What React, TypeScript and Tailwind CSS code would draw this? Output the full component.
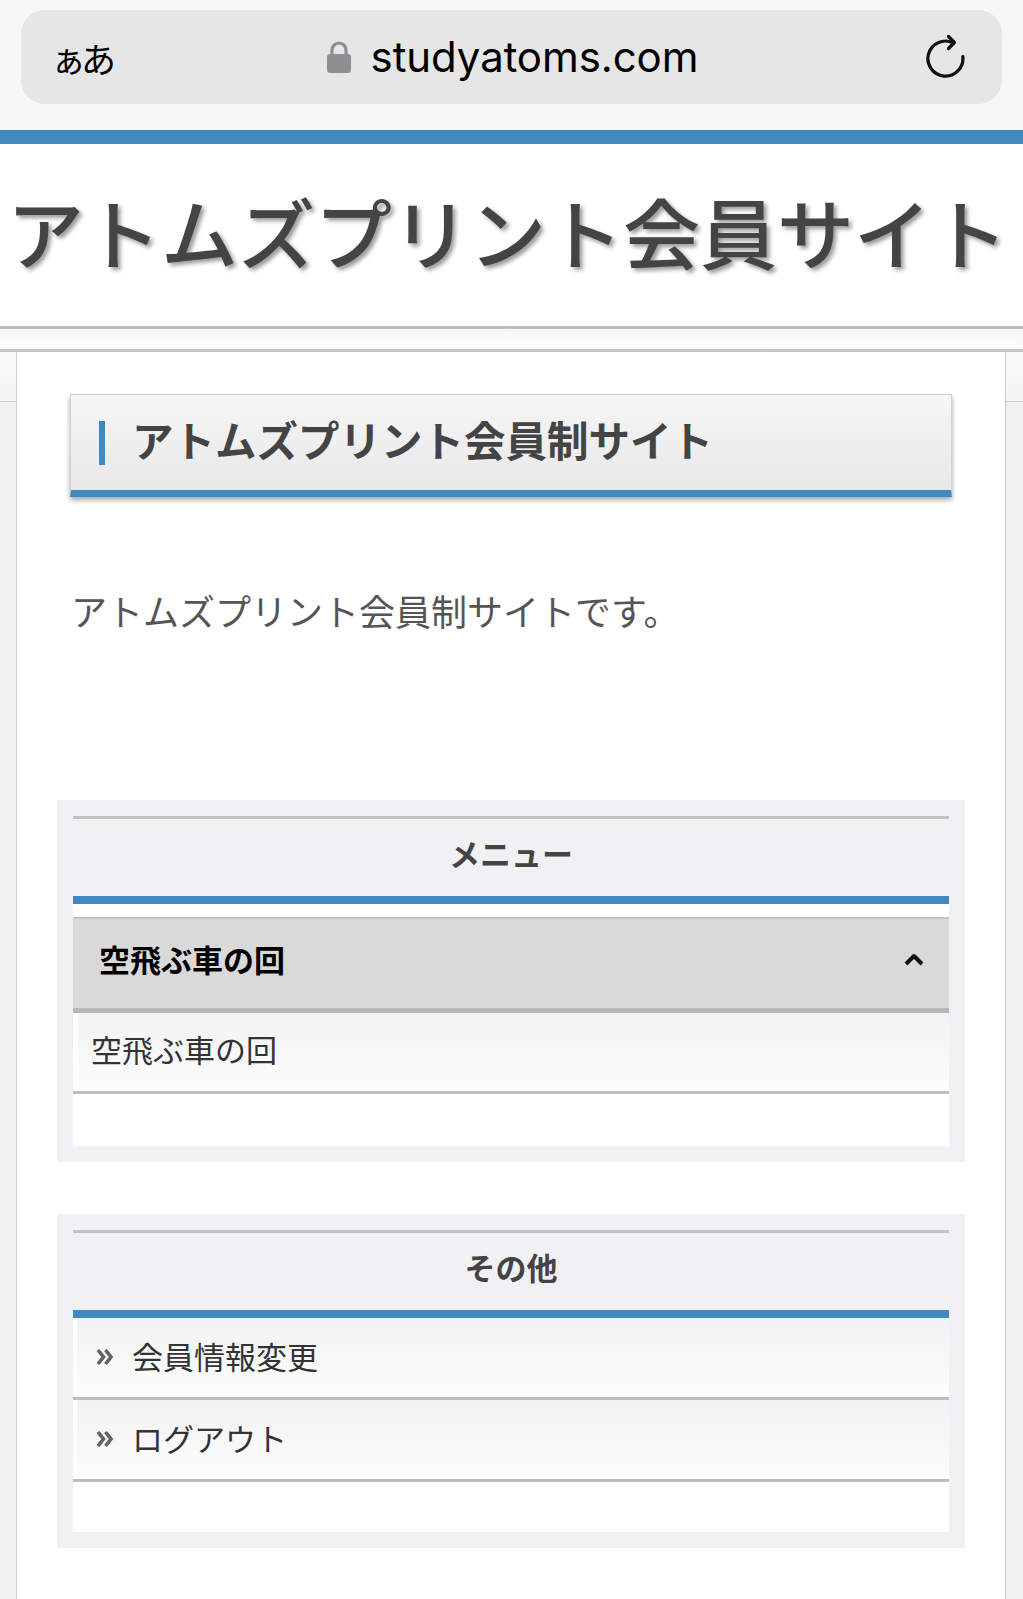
const blue = "bg-[#3f8bc0]";

const Lock = () => (
  <svg width="28" height="34" viewBox="0 0 28 34" className="shrink-0">
    <path d="M7 15V10a7 7 0 0 1 14 0v5" fill="none" stroke="#8e8e93" strokeWidth="3.2" />
    <rect x="2" y="14" width="24" height="19" rx="3" fill="#8e8e93" />
  </svg>
);

const Reload = () => (
  <svg width="40" height="48" viewBox="0 0 40 48" className="shrink-0">
    <path d="M28 9.8A17.5 17.5 0 1 0 37.8 23.5" fill="none" stroke="#111" strokeWidth="3.2" strokeLinecap="round" />
    <path d="M23.5 3.5l6 6-6 6" fill="none" stroke="#111" strokeWidth="3.2" strokeLinecap="round" strokeLinejoin="round" />
  </svg>
);

const ChevronUp = () => (
  <svg width="22" height="14" viewBox="0 0 22 14">
    <path d="M3 12l8-8 8 8" fill="none" stroke="#111" strokeWidth="4" strokeLinejoin="round" />
  </svg>
);

const DoubleChevron = () => (
  <svg width="19" height="18" viewBox="0 0 19 18" className="shrink-0">
    <path d="M2 2l5.5 7L2 16M9.5 2l5.5 7-5.5 7" fill="none" stroke="#626262" strokeWidth="3.6" />
  </svg>
);

const BoxTitle = ({ label }: { label: string }) => (
  <>
    <div className="h-[3px] bg-[#c2c2c2]" />
    <div className="h-[77px] pb-[9px] flex items-center justify-center text-[31px] font-bold text-[#444]">{label}</div>
    <div className={`h-[8px] ${blue}`} />
  </>
);

const LinkRow = ({ label }: { label: string }) => (
  <div className="border-b-[3px] border-[#bdbdbd]">
    <div className="ml-[4px] h-[79px] pb-[2px] flex items-center gap-[17px] pl-[19px] bg-gradient-to-b from-[#f2f2f4] to-[#fdfdfd] text-[31px] text-[#333]">
      <DoubleChevron />
      <span>{label}</span>
    </div>
  </div>
);

export default function App() {
  return (
    <div className="w-[1023px] min-h-[1599px] bg-white flex flex-col overflow-hidden font-['Noto_Sans_CJK_JP',sans-serif]">
      {/* Browser bar */}
      <div className="h-[130px] bg-[#f7f7f7] pt-[10px] px-[21px]">
        <div className="h-[94px] rounded-[24px] bg-[#e6e6e6] grid grid-cols-[1fr_auto_1fr] items-center px-[30px]">
          <span className="text-[35px] leading-none text-black tracking-[-5px]">ぁあ</span>
          <div className="flex items-center gap-[18px]">
            <Lock />
            <span className="text-[42px] leading-none text-black font-['Inter',sans-serif] tracking-[-0.1px]">studyatoms.com</span>
          </div>
          <div className="flex justify-end pr-[7px]">
            <Reload />
          </div>
        </div>
      </div>

      <div className={`h-[14px] ${blue}`} />

      {/* Site header */}
      <header className="h-[182px] pb-[10px] pr-[8px] flex items-center justify-center">
        <h1 className="whitespace-nowrap text-[77px] leading-none font-medium text-[#444] [text-shadow:3px_3px_4px_rgba(0,0,0,0.4)]">
          アトムズプリント会員サイト
        </h1>
      </header>
      <div className="h-[3px] bg-[#bfbfbf]" />
      <div className="h-[20px] bg-gradient-to-b from-[#f6f6f6] to-[#fdfdfd]" />
      <div className="h-[3px] bg-[#c4c4c4]" />

      {/* Body */}
      <div className="flex flex-1">
        <div className="w-[16px] flex flex-col bg-[#f1f1f1]">
          <div className="h-[50px] bg-gradient-to-b from-[#fafafa] to-[#f4f4f4] border-b border-[#cfcfcf]" />
        </div>

        <main className="flex-1 border-x border-[#cdcdcd] pt-[42px] pb-[50px]">
          <div className="mx-[53px] h-[103px] border border-[#d2d2d2] border-b-[7px] border-b-[#3f8bc0] bg-gradient-to-b from-[#f6f6f6] to-[#e8e8e8] shadow-[0_3px_5px_rgba(0,0,0,0.35)] flex items-center pl-[28px]">
            <div className={`w-[6px] h-[44px] ${blue}`} />
            <h2 className="ml-[27px] mb-[5px] text-[41.5px] font-bold text-[#444] leading-none">アトムズプリント会員制サイト</h2>
          </div>

          <p className="mx-[54px] mt-[88px] text-[36px] leading-[50px] text-[#555]">アトムズプリント会員制サイトです。</p>

          {/* Menu */}
          <section className="mx-[40px] mt-[165px] bg-[#f1f1f3] p-[16px]">
            <BoxTitle label="メニュー" />
            <div className="bg-white pt-[13px] pb-[52px]">
              <div className="border-t-[2px] border-[#c4c4c4] border-b-[5px] border-b-[#b8b8b8] bg-[#d9d9d9] h-[96px] pb-[9px] flex items-center justify-between pl-[26px] pr-[24px]">
                <span className="text-[31px] font-bold text-black">空飛ぶ車の回</span>
                <ChevronUp />
              </div>
              <div className="border-b-[3px] border-[#bdbdbd]">
                <div className="ml-[5px] h-[78px] pb-[5px] flex items-center pl-[13px] bg-gradient-to-b from-[#f2f2f4] to-[#fdfdfd] text-[31px] text-[#333]">
                  空飛ぶ車の回
                </div>
              </div>
            </div>
          </section>

          {/* Others */}
          <section className="mx-[40px] mt-[52px] bg-[#f1f1f3] p-[16px]">
            <BoxTitle label="その他" />
            <div className="bg-white pb-[50px]">
              <LinkRow label="会員情報変更" />
              <LinkRow label="ログアウト" />
            </div>
          </section>
        </main>

        <div className="w-[17px] flex flex-col bg-[#f1f1f1]">
          <div className="h-[50px] bg-gradient-to-b from-[#fafafa] to-[#f4f4f4] border-b border-[#cfcfcf]" />
        </div>
      </div>
    </div>
  );
}
